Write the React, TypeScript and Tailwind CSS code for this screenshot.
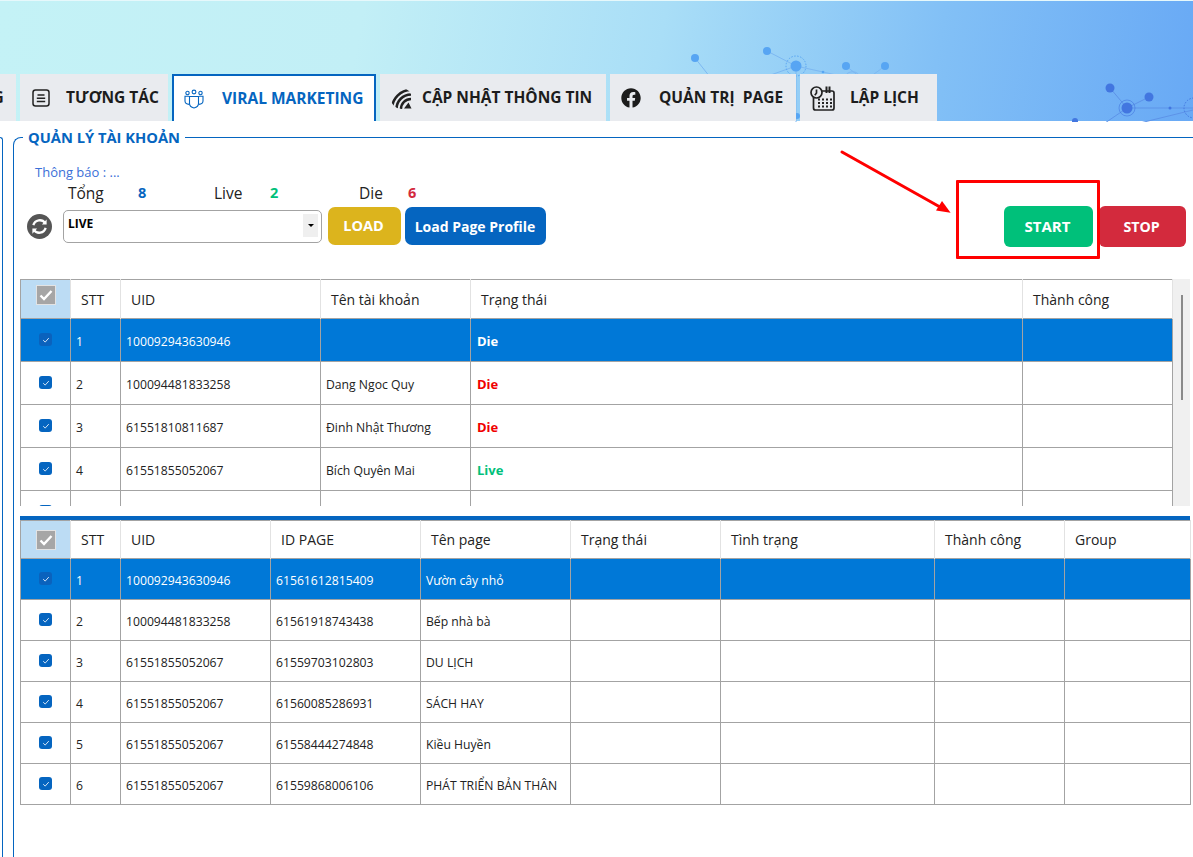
import { FaFacebook } from "react-icons/fa";

const font = { fontFamily: '"Open Sans","Noto Sans",sans-serif' };

function Check({ size = 13, sel = false }: { size?: number; sel?: boolean }) {
  return (
    <span
      className={`inline-flex items-center justify-center rounded-[3px] ${sel ? "bg-[#0a62bd]" : "bg-[#0565c0]"}`}
      style={{ width: size, height: size }}
    >
      <svg width="8" height="8" viewBox="0 0 10 10" fill="none" stroke="#dbe9f8" strokeWidth="1.2">
        <path d="M1.5 5.2 4 7.6 8.5 2.6" />
      </svg>
    </span>
  );
}

function HeadCheck() {
  return (
    <span className="inline-flex h-[20px] w-[20px] items-center justify-center border border-[#e3e3e3] bg-[#a6a6a6]">
      <svg width="14" height="12" viewBox="0 0 14 12" fill="none" stroke="#fff" strokeWidth="2.4">
        <path d="M1.5 6.5 5 10 12.5 2" />
      </svg>
    </span>
  );
}

function Tab({ children, active, w, icon }: any) {
  return (
    <div
      className={`flex h-[47px] shrink-0 items-center pt-[1px] text-[15.5px] font-bold ${
        active ? "border-x-2 border-t-2 border-[#0565c0] bg-white text-[#0565c0]" : "bg-[#e9ebef] text-[#1c1c1c]"
      }`}
      style={{ width: w }}
    >
      {icon}
      {children}
    </div>
  );
}

const cellBase = "border border-[#a3a3a3] px-[5px] overflow-hidden whitespace-nowrap";
const headBase = "border-x border-[#e2e2e2] pl-[10px] text-left text-[14px] font-normal text-[#222] bg-white";

function DataTable({
  cols,
  heads,
  rows,
  rowH,
  headH,
  checkPad,
}: {
  cols: number[];
  heads: string[];
  rows: (string | { t: string; c: string })[][];
  rowH: number;
  headH: number;
  checkPad: string;
}) {
  return (
    <table className="table-fixed border-collapse border border-[#a3a3a3]" style={{ width: cols.reduce((a, b) => a + b, 0) }}>
      <colgroup>
        {cols.map((c, i) => (
          <col key={i} style={{ width: c }} />
        ))}
      </colgroup>
      <thead>
        <tr style={{ height: headH }}>
          <th className={`bg-[#bcdcf4] text-center align-middle leading-none ${checkPad}`}>
            <HeadCheck />
          </th>
          {heads.map((h) => (
            <th key={h} className={headBase}>
              {h}
            </th>
          ))}
        </tr>
      </thead>
      <tbody>
        {rows.map((r, i) => {
          const sel = i === 0;
          return (
            <tr key={i} style={{ height: rowH }} className={sel ? "bg-[#0078d7] text-white" : "bg-white text-[#222]"}>
              <td className={`${cellBase} pb-[4px] text-center leading-none`}>
                <Check sel={sel} />
              </td>
              {r.map((c, j) =>
                typeof c === "string" ? (
                  <td key={j} className={`${cellBase} pt-[4px] text-[12.2px]`}>
                    {c}
                  </td>
                ) : (
                  <td key={j} className={`${cellBase} pl-[6px] pt-[4px] text-[13px] font-bold ${sel ? "text-white" : c.c}`}>
                    {c.t}
                  </td>
                ),
              )}
            </tr>
          );
        })}
      </tbody>
    </table>
  );
}

const die = { t: "Die", c: "text-[#f00000]" };
const live = { t: "Live", c: "text-[#00c07a]" };

function Network() {
  const c1 = "#57a5f3";
  const c2 = "#4276e0";
  const l = "#7db8f2";
  return (
    <svg className="absolute left-0 top-0" width="1193" height="121" viewBox="0 0 1193 121" fill="none">
      <g stroke={l} strokeWidth="1">
        <path d="M695 57 710 76" />
        <path d="M767 50 796 65 765 76" />
        <path d="M796 65 823 71 845 76" />
        <path d="M796 65 796 121" />
        <path d="M846 65 860 76M885 65 870 76" />
        <path d="M845 76A8 8 0 0 1 860 76" />
      </g>
      <circle cx="695" cy="57" r="4" fill={c1} />
      <circle cx="767" cy="50" r="4" fill={c1} />
      <circle cx="796" cy="65" r="5.5" fill={c1} />
      <circle cx="796" cy="65" r="10" stroke={c1} strokeDasharray="1.5 1.5" />
      <circle cx="823" cy="71" r="1.3" fill={c1} />
      <circle cx="846" cy="65" r="4" fill={c1} />
      <circle cx="885" cy="65" r="4" fill={c1} />
      <circle cx="797" cy="115" r="3" fill={c1} />
      <g stroke="#5d93e8" strokeWidth="1">
        <path d="M1110 87 1127 107 1149 96" />
        <path d="M1127 107 1105 122" />
        <path d="M1127 107H1193" />
        <path d="M1193 109 1140 122" />
      </g>
      <circle cx="1110" cy="87" r="4.5" fill={c2} />
      <circle cx="1149" cy="96" r="4.5" fill={c2} />
      <circle cx="1127" cy="107" r="5.5" fill={c2} />
      <circle cx="1127" cy="107" r="8" stroke={c2} strokeOpacity="0.6" />
      <circle cx="1170" cy="107" r="1.5" fill={c2} />
      <circle cx="1075" cy="120" r="3" fill={c2} />
      <circle cx="1194" cy="107" r="10" stroke={c2} strokeDasharray="1.5 1.5" />
    </svg>
  );
}

const tabIconBox = "flex shrink-0 items-center justify-center";

export default function App() {
  return (
    <div className="relative h-[857px] w-[1193px] overflow-hidden bg-white" style={font}>
      {/* banner */}
      <div className="relative h-[121px] border-t border-[#e6f8fb] bg-[linear-gradient(100deg,#c4f2f6_0%,#c2eff6_30%,#a9def7_55%,#82c0f6_78%,#68a9f5_100%)]">
        <Network />
        <div className="absolute left-[-132px] top-[73px] flex gap-[4px]">
          <Tab w={148}>
            <span className="ml-[112px]">NG</span>
          </Tab>
          <Tab
            w={148}
            icon={
              <span className={`${tabIconBox} ml-[12px] mr-[16px]`}>
                <svg width="18" height="18" viewBox="0 0 18 18" fill="none" stroke="#222" strokeWidth="1.5">
                  <rect x="1" y="1" width="16" height="16" rx="2.5" />
                  <path d="M5.5 6h7M4.8 9.2h8.4M4.8 12.4h8.4" />
                </svg>
              </span>
            }
          >
            TƯƠNG TÁC
          </Tab>
          <Tab
            w={204}
            active
            icon={
              <span className={`${tabIconBox} ml-[10px] mr-[18px]`}>
                <svg width="20" height="20" viewBox="0 0 20 20" fill="none" stroke="#0565c0" strokeWidth="1.1">
                  <circle cx="3.5" cy="4" r="1.7" />
                  <circle cx="10" cy="3" r="1.9" />
                  <circle cx="16.5" cy="4" r="1.7" />
                  <path d="M5.5 7.5H14.5V14.5C14.5 17 12 18.5 10 19C8 18.5 5.5 17 5.5 14.5Z" />
                  <path d="M5 7.2H1V12C1 14 2.5 15.2 5.2 15.4M15 7.2H19V12C19 14 17.5 15.2 14.8 15.4" />
                </svg>
              </span>
            }
          >
            VIRAL MARKETING
          </Tab>
          <Tab
            w={226}
            icon={
              <span className={`${tabIconBox} ml-[11px] mr-[10px]`}>
                <svg width="21" height="21" viewBox="0 0 21 21" fill="none" stroke="#222" strokeWidth="2.5">
                  <clipPath id="stripes">
                    <circle cx="10.5" cy="10.5" r="10.5" />
                  </clipPath>
                  <g clipPath="url(#stripes)">
                    <path d="M1 21A19 19 0 0 1 20 2" />
                    <path d="M5.5 21A14.5 14.5 0 0 1 20 6.5" />
                    <path d="M10 21A10 10 0 0 1 20 11" />
                  </g>
                  <path d="M13 20.5 17.5 14.5 20.5 20.5Z" fill="#222" stroke="none" />
                </svg>
              </span>
            }
          >
            CẬP NHẬT THÔNG TIN
          </Tab>
          <Tab
            w={186}
            icon={
              <span className={`${tabIconBox} ml-[11px] mr-[18px]`}>
                <FaFacebook size={20} color="#1c1c1c" />
              </span>
            }
          >
            QUẢN TRỊ&nbsp;&nbsp;PAGE
          </Tab>
          <Tab
            w={137}
            icon={
              <span className={`${tabIconBox} ml-[10px] mr-[15px]`}>
                <svg width="25" height="25" viewBox="0 0 25 25" fill="none" stroke="#222" strokeWidth="1.7">
                  <rect x="3.5" y="5" width="20.5" height="19" rx="2" />
                  <circle cx="6.5" cy="6.5" r="5.5" fill="#e9ebef" />
                  <path d="M6.5 3.5V7L4.8 9.2" />
                  <path d="M16.5 0.5V7M19.5 0.5V7" strokeWidth="2" />
                  <path
                    d="M8 13.5h2M12 13.5h2M16 13.5h2M20 13.5h2M8 17h2M12 17h2M16 17h2M20 17h2M8 20.5h2M12 20.5h2M16 20.5h2M20 20.5h2"
                    strokeWidth="2"
                  />
                </svg>
              </span>
            }
          >
            LẬP LỊCH
          </Tab>
        </div>
      </div>

      <div className="mt-[8px] flex">
        {/* right edge of the panel to the left */}
        <div className="mt-[8px] h-[720px] w-[3px] shrink-0 rounded-tr-[4px] border-r border-t border-[#0565c0]" />

        <fieldset className="relative ml-[10px] h-[740px] flex-1 rounded-tl-[8px] border-l border-t border-[#0565c0] pl-[6px]">
          <legend className="ml-[3px] px-[5px] text-[14.7px] font-bold leading-[17px] text-[#0565c0]">QUẢN LÝ TÀI KHOẢN</legend>

          {/* controls */}
          <div className="relative h-[133px]">
            <div className="pl-[15px] pt-[18px] text-[13px] leading-[16px] text-[#3a6fd8]">Thông báo : ...</div>
            <div className="mt-[4px] flex h-[18px] items-center text-[15.5px] leading-[18px] text-[#222]">
              <span className="ml-[48px] w-[70px]">Tổng</span>
              <span className="w-[76px] text-[14.5px] font-bold text-[#0565c0]">8</span>
              <span className="w-[56px]">Live</span>
              <span className="w-[89px] text-[14.5px] font-bold text-[#00c07a]">2</span>
              <span className="w-[49px]">Die</span>
              <span className="text-[14.5px] font-bold text-[#d32a3d]">6</span>
            </div>
            <div className="mt-[5px] flex items-start">
              <span className="ml-[7px] mt-[7px] flex h-[25px] w-[25px] items-center justify-center rounded-full bg-[#555]">
                <svg width="19" height="19" viewBox="0 0 20 20" fill="none" stroke="#fff" strokeWidth="2.4">
                  <path d="M3.5 8.5A7 7 0 0 1 16 6.5" />
                  <path d="M16.5 11.5A7 7 0 0 1 4 13.5" />
                  <path d="M17.5 2.5V8H12.5Z" fill="#fff" stroke="none" />
                  <path d="M2.5 17.5V12H7.5Z" fill="#fff" stroke="none" />
                </svg>
              </span>
              <div className="relative ml-[11px] mt-[3px] h-[33px] w-[259px] rounded-[5px] border border-[#a3a3a3] bg-white pl-[4px] pt-[5px] text-[12px] font-bold leading-[16px] text-black">
                LIVE
                <span className="absolute right-[3px] top-[3px] flex h-[23px] w-[15px] items-center justify-center bg-[#efefef]">
                  <span className="h-0 w-0 border-x-[3px] border-t-[3px] border-x-transparent border-t-black" />
                </span>
              </div>
              <button className="ml-[6px] h-[38px] w-[73px] rounded-[7px] bg-[#dcb41d] pr-[2px] text-[14.5px] font-bold text-white">LOAD</button>
              <button className="ml-[4px] h-[38px] w-[141px] rounded-[7px] bg-[#0565c0] pr-[1px] text-[14px] font-bold text-white">
                Load Page Profile
              </button>
            </div>
            {/* annotation + start/stop */}
            <button className="absolute left-[984px] top-[60px] h-[41px] w-[89px] rounded-[6px] bg-[#00c07a] pr-[2px] text-[15px] font-bold text-white">
              START
            </button>
            <button className="absolute left-[1079px] top-[60px] h-[41px] w-[87px] rounded-[6px] bg-[#d32a3d] pr-[2px] text-[14.2px] font-bold text-white">
              STOP
            </button>
            <div className="absolute left-[936px] top-[34px] h-[79px] w-[144px] rounded-[1px] border-[3px] border-[#f00]" />
            <svg className="absolute left-[815px] top-[-1px]" width="120" height="70" viewBox="0 0 120 70" fill="none">
              <path d="M7 7 105 62" stroke="#f00" strokeWidth="3" strokeLinecap="round" />
              <path d="M115.6 67.7 101 65.5 107 56Z" fill="#f00" />
            </svg>
          </div>

          {/* table 1 */}
          <div className="flex h-[227px] overflow-hidden">
            <div className="h-[227px] w-[1153px] overflow-hidden">
              <DataTable
                cols={[50, 50, 200, 150, 552, 150]}
                heads={["STT", "UID", "Tên tài khoản", "Trạng thái", "Thành công"]}
                headH={39}
                rowH={43}
                checkPad="pb-[8px]"
                rows={[
                  ["1", "100092943630946", "", die, ""],
                  ["2", "100094481833258", "Dang Ngoc Quy", die, ""],
                  ["3", "61551810811687", "Đinh Nhật Thương", die, ""],
                  ["4", "61551855052067", "Bích Quyên Mai", live, ""],
                  ["", "", "", "", ""],
                ]}
              />
            </div>
            <div className="relative h-[227px] w-[17px] bg-[#f0f0f0]">
              <span className="absolute left-[8px] top-[16px] h-[105px] w-[2px] bg-[#8a8a8a]" />
            </div>
          </div>

          {/* table 2 */}
          <div className="mt-[10px] w-[1170px] border-t-[4px] border-[#0565c0]">
            <DataTable
              cols={[50, 50, 150, 150, 150, 150, 214, 130, 126]}
              heads={["STT", "UID", "ID PAGE", "Tên page", "Trạng thái", "Tình trạng", "Thành công", "Group"]}
              headH={38}
              rowH={41}
              checkPad=""
              rows={[
                ["1", "100092943630946", "61561612815409", "Vườn cây nhỏ", "", "", "", ""],
                ["2", "100094481833258", "61561918743438", "Bếp nhà bà", "", "", "", ""],
                ["3", "61551855052067", "61559703102803", "DU LỊCH", "", "", "", ""],
                ["4", "61551855052067", "61560085286931", "SÁCH HAY", "", "", "", ""],
                ["5", "61551855052067", "61558444274848", "Kiều Huyền", "", "", "", ""],
                ["6", "61551855052067", "61559868006106", "PHÁT TRIỂN BẢN THÂN", "", "", "", ""],
              ]}
            />
          </div>
        </fieldset>
      </div>
    </div>
  );
}
